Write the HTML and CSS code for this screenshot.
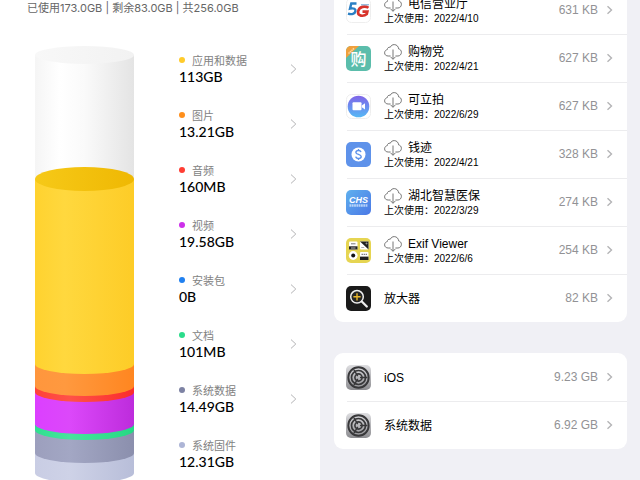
FILE: index.html
```html
<!doctype html>
<html lang="zh-CN">
  <head>
    <meta charset="utf-8">
    <meta name="viewport" content="width=device-width, initial-scale=1.0">
    <title>存储空间</title>
    <link rel="stylesheet" href="styles.css">
  </head>
  <body>
    <svg class="defs" aria-hidden="true">
      <symbol id="chevron" viewBox="0 0 7 10">
        <path d="M1 .6 5.8 5 1 9.4" fill="none" stroke="currentColor"/>
      </symbol>
      <symbol id="chevron-bold" viewBox="0 0 7 10">
        <path d="M1.500 1.200 5.500 5l-4 3.800" fill="none" stroke="currentColor" stroke-width="1.400"/>
      </symbol>
      <symbol id="cloud" viewBox="0 0 18 16">
        <path d="M6.600 12H4.200C2.200 12 .6 10.800 .6 8.900c0-1.800 1.200-3 2.700-3.300C3.300 4 4.500 2.900 6.300 3.200 7 1.500 8.500.6 10.200.6c2.500 0 4.300 1.900 4.400 4.300 1.700.3 2.800 1.700 2.800 3.400 0 2.100-1.500 3.700-3.400 3.700h-2.600M9 5.500v9.700M6.600 12.900 9 15.300l2.400-2.400" fill="none" stroke="#777" stroke-width="1"/>
      </symbol>
      <symbol id="gear" viewBox="0 0 25 25">
        <rect width="25" height="25" rx="5" fill="url(#steel)"/>
        <circle cx="12.500" cy="12.500" r="10.200" fill="none" stroke="#38383a" stroke-width="1.900"/>
        <circle cx="12.500" cy="12.500" r="7" fill="none" stroke="#38383a" stroke-width="1.700"/>
        <circle cx="12.500" cy="12.500" r="3.600" fill="none" stroke="#38383a" stroke-width="1.600"/>
        <path d="M14 12.500h7.500M11.700 11.200 8 4.800M11.700 13.800 8 20.200" stroke="#38383a" stroke-width="1.400"/>
      </symbol>
      <defs>
        <linearGradient id="steel" x1="0" y1="0" x2="0" y2="1">
          <stop offset="0" stop-color="#dedee1"/><stop offset="1" stop-color="#8c8c90"/>
        </linearGradient>
      </defs>
    </svg>

    <section class="usage">
      <p class="summary">已使用173.0GB | 剩余83.0GB | 共256.0GB</p>
      <div class="usage-body">
        <svg class="tube" viewBox="0 0 99 438" role="img" aria-label="存储空间用量">
          <defs>
            <linearGradient id="glass">
              <stop offset="0" stop-color="#f5f5f5"/><stop offset=".25" stop-color="#fff"/>
              <stop offset=".5" stop-color="#fafafa"/><stop offset="1" stop-color="#e4e4e4"/>
            </linearGradient>
            <linearGradient id="lid">
              <stop offset="0" stop-color="#f8f8f8"/><stop offset="1" stop-color="#f2f2f2"/>
            </linearGradient>
            <linearGradient id="apps">
              <stop offset="0" stop-color="#ffd22f"/><stop offset=".3" stop-color="#ffd83e"/><stop offset="1" stop-color="#fdcc27"/>
            </linearGradient>
            <linearGradient id="apps-top">
              <stop offset="0" stop-color="#f6c918"/><stop offset="1" stop-color="#efb803"/>
            </linearGradient>
            <linearGradient id="photos">
              <stop offset="0" stop-color="#ff963d"/><stop offset=".3" stop-color="#ff993f"/><stop offset="1" stop-color="#ff8620"/>
            </linearGradient>
            <linearGradient id="audio">
              <stop offset="0" stop-color="#ff4238"/><stop offset=".35" stop-color="#ff5148"/><stop offset="1" stop-color="#fb2d2b"/>
            </linearGradient>
            <linearGradient id="video">
              <stop offset="0" stop-color="#dc3fff"/><stop offset=".35" stop-color="#dc48fa"/><stop offset="1" stop-color="#bd2cdc"/>
            </linearGradient>
            <linearGradient id="docs">
              <stop offset="0" stop-color="#2fe08f"/><stop offset=".35" stop-color="#48e39d"/><stop offset="1" stop-color="#25d983"/>
            </linearGradient>
            <linearGradient id="system">
              <stop offset="0" stop-color="#9c9fbd"/><stop offset=".35" stop-color="#a3a7c4"/><stop offset="1" stop-color="#8b8fad"/>
            </linearGradient>
            <linearGradient id="firmware">
              <stop offset="0" stop-color="#c9cde4"/><stop offset=".35" stop-color="#ced2e7"/><stop offset="1" stop-color="#b8bed9"/>
            </linearGradient>
          </defs>
          <path d="M0 9h99v130H0z" fill="url(#glass)"/>
          <ellipse cx="49.500" cy="9" rx="49.500" ry="9" fill="url(#lid)"/>
          <!-- bottom layer first, each one covers the top of the one below -->
          <path d="M0 133h99v294a49.500 10 0 0 1-99 0z" fill="url(#firmware)"/>
          <path d="M0 133h99v274a49.500 10 0 0 1-99 0z" fill="url(#system)"/>
          <path d="M0 133h99v251a49.500 10 0 0 1-99 0z" fill="url(#docs)"/>
          <path d="M0 133h99v245a49.500 10 0 0 1-99 0z" fill="url(#video)"/>
          <path d="M0 133h99v213a49.500 10 0 0 1-99 0z" fill="url(#audio)"/>
          <path d="M0 133h99v207a49.500 10 0 0 1-99 0z" fill="url(#photos)"/>
          <path d="M0 133h99v185a49.500 10 0 0 1-99 0z" fill="url(#apps)"/>
          <ellipse cx="49.500" cy="133" rx="49.500" ry="12" fill="url(#apps-top)"/>
        </svg>
        <ul class="kinds">
          <li><a class="kind apps" href="#"><span class="kind-name">应用和数据</span><span class="kind-size">113GB</span><svg class="go"><use href="#chevron"/></svg></a></li>
          <li><a class="kind photos" href="#"><span class="kind-name">图片</span><span class="kind-size">13.21GB</span><svg class="go"><use href="#chevron"/></svg></a></li>
          <li><a class="kind audio" href="#"><span class="kind-name">音频</span><span class="kind-size">160MB</span><svg class="go"><use href="#chevron"/></svg></a></li>
          <li><a class="kind video" href="#"><span class="kind-name">视频</span><span class="kind-size">19.58GB</span><svg class="go"><use href="#chevron"/></svg></a></li>
          <li><a class="kind packages" href="#"><span class="kind-name">安装包</span><span class="kind-size">0B</span><svg class="go"><use href="#chevron"/></svg></a></li>
          <li><a class="kind docs" href="#"><span class="kind-name">文档</span><span class="kind-size">101MB</span><svg class="go"><use href="#chevron"/></svg></a></li>
          <li><a class="kind system" href="#"><span class="kind-name">系统数据</span><span class="kind-size">14.49GB</span><svg class="go"><use href="#chevron"/></svg></a></li>
          <li><div class="kind firmware"><span class="kind-name">系统固件</span><span class="kind-size">12.31GB</span></div></li>
        </ul>
      </div>
    </section>

    <section class="programs">
      <ul class="card scrolled">
        <li><a class="app" href="#">
          <svg class="icon" viewBox="0 0 25 25">
            <rect x=".5" y=".5" width="24" height="24" rx="5" fill="#fff" stroke="#eee"/>
            <path d="M10.500 5.500H5.300L4 10.700c4-1 5.900.3 5.400 2.600-.5 2.600-3.700 3.500-7.400 2.400" fill="none" stroke="#2a7fc4" stroke-width="2.400"/>
            <path d="M22.500 9.800c-3.200-2.200-9.500-1.500-10.400 3.700-.9 4.600 5.400 5.500 8.700 2.600l.6-2.500h-4.900" fill="none" stroke="#d8342c" stroke-width="2.600"/>
            <path d="M15 6.800h8" stroke="#6fa3d0"/>
          </svg>
          <span class="about"><span class="name"><svg class="cloud"><use href="#cloud"/></svg>电信营业厅</span><span class="date">上次使用：2022/4/10</span></span>
          <span class="size">631 KB</span><svg class="go"><use href="#chevron-bold"/></svg></a></li>
        <li><a class="app" href="#">
          <svg class="icon" viewBox="0 0 25 25">
            <rect width="25" height="25" rx="5" fill="#5bbdab"/>
            <path d="M5 0h8L0 12V5a5 5 0 0 1 5-5z" fill="#f0a03c"/>
            <path d="M2.500 7.500 8 2.400" stroke="#fbd9a4" stroke-width="1.500" stroke-dasharray="1.500 .5"/>
            <text class="glyph" x="12.500" y="19">购</text>
          </svg>
          <span class="about"><span class="name"><svg class="cloud"><use href="#cloud"/></svg>购物党</span><span class="date">上次使用：2022/4/21</span></span>
          <span class="size">627 KB</span><svg class="go"><use href="#chevron-bold"/></svg></a></li>
        <li><a class="app" href="#">
          <svg class="icon" viewBox="0 0 25 25">
            <defs><linearGradient id="cam" x1="0" y1="0" x2="0" y2="1"><stop offset="0" stop-color="#8064e8"/><stop offset="1" stop-color="#55b8f5"/></linearGradient></defs>
            <rect x=".5" y=".5" width="24" height="24" rx="5" fill="#fff" stroke="#eee"/>
            <circle cx="12.500" cy="12.500" r="10.800" fill="url(#cam)"/>
            <rect x="6.500" y="8.300" width="9" height="8" rx="1" fill="#fff"/>
            <path d="m15.800 11.500 3.200-2.300v6.400l-3.200-2.300z" fill="#fff"/>
          </svg>
          <span class="about"><span class="name"><svg class="cloud"><use href="#cloud"/></svg>可立拍</span><span class="date">上次使用：2022/6/29</span></span>
          <span class="size">627 KB</span><svg class="go"><use href="#chevron-bold"/></svg></a></li>
        <li><a class="app" href="#">
          <svg class="icon" viewBox="0 0 25 25">
            <rect width="25" height="25" rx="5" fill="#5e92ea"/>
            <circle cx="12.500" cy="12.500" r="7" fill="#fff"/>
            <path d="M15 10.200c-.3-1.200-1.300-1.700-2.500-1.700-1.500 0-2.600.7-2.600 1.900 0 2.600 5.300 1.400 5.300 4.100 0 1.300-1.200 2-2.700 2-1.400 0-2.500-.6-2.700-1.900M12.500 7v1.500M12.500 16.500V18" fill="none" stroke="#5e92ea" stroke-width="1.400"/>
          </svg>
          <span class="about"><span class="name"><svg class="cloud"><use href="#cloud"/></svg>钱迹</span><span class="date">上次使用：2022/4/21</span></span>
          <span class="size">328 KB</span><svg class="go"><use href="#chevron-bold"/></svg></a></li>
        <li><a class="app" href="#">
          <svg class="icon" viewBox="0 0 25 25">
            <defs><linearGradient id="chs" x1="0" y1="0" x2="1" y2="1"><stop offset="0" stop-color="#5fb0ee"/><stop offset="1" stop-color="#4a78e6"/></linearGradient></defs>
            <rect width="25" height="25" rx="5" fill="url(#chs)"/>
            <text class="logo" x="12.500" y="12.500">CHS</text>
            <path d="M3.500 15.500h18" stroke="#d8e9ff" stroke-width="2.400" stroke-dasharray="1.800 .5" opacity=".75"/>
          </svg>
          <span class="about"><span class="name"><svg class="cloud"><use href="#cloud"/></svg>湖北智慧医保</span><span class="date">上次使用：2022/3/29</span></span>
          <span class="size">274 KB</span><svg class="go"><use href="#chevron-bold"/></svg></a></li>
        <li><a class="app" href="#">
          <svg class="icon" viewBox="0 0 25 25">
            <rect width="25" height="25" rx="5" fill="#e6d552"/>
            <rect x="3" y="3.500" width="8.500" height="8" rx="1" fill="#fff"/><path d="M3 8.300h8.500v3.200H3z" fill="#222"/><path d="M5 5.800h4.500" stroke="#777"/><path d="M5 10h4.500" stroke="#ddd" stroke-width=".8"/>
            <rect x="14" y="3.500" width="8.500" height="8" rx="1" fill="#fff"/><path d="M14 3.500h8.500v8z" fill="#222"/><path d="M15.200 9.500h3M19.500 5.500h2M20.500 4.500v2" stroke="#999" stroke-width=".8"/>
            <circle cx="7.200" cy="17.500" r="4.400" fill="#fff"/><circle cx="7.200" cy="17.500" r="2" fill="#111"/>
            <rect x="14" y="14" width="8.500" height="8" rx="1" fill="#fff"/><path d="M14 18.600h8.500V22H14z" fill="#222"/><path d="M15.500 16.300h5.500" stroke="#666" stroke-dasharray="1.500 .6"/>
          </svg>
          <span class="about"><span class="name"><svg class="cloud"><use href="#cloud"/></svg>Exif Viewer</span><span class="date">上次使用：2022/6/6</span></span>
          <span class="size">254 KB</span><svg class="go"><use href="#chevron-bold"/></svg></a></li>
        <li><a class="app" href="#">
          <svg class="icon" viewBox="0 0 25 25">
            <rect width="25" height="25" rx="5" fill="#1a1a1a"/>
            <circle cx="11" cy="10.800" r="6.300" fill="#252525" stroke="#eee" stroke-width="1.500"/>
            <path d="m15.800 15.500 5 5" stroke="#eee" stroke-width="2.300" stroke-linecap="round"/>
            <path d="M11 7.200v7.200M7.400 10.800h7.200" stroke="#e9b72c" stroke-width="1.400"/>
          </svg>
          <span class="about"><span class="name">放大器</span></span>
          <span class="size">82 KB</span><svg class="go"><use href="#chevron-bold"/></svg></a></li>
      </ul>

      <ul class="card">
        <li><a class="app" href="#">
          <svg class="icon"><use href="#gear"/></svg>
          <span class="about"><span class="name">iOS</span></span>
          <span class="size">9.23 GB</span><svg class="go"><use href="#chevron-bold"/></svg></a></li>
        <li><a class="app" href="#">
          <svg class="icon"><use href="#gear"/></svg>
          <span class="about"><span class="name">系统数据</span></span>
          <span class="size">6.92 GB</span><svg class="go"><use href="#chevron-bold"/></svg></a></li>
      </ul>
    </section>
  </body>
</html>
```
FILE: styles.css
```css
* {
  box-sizing: border-box;
  margin: 0;
  padding: 0;
}

body {
  display: grid;
  grid-template-columns: 1fr 1fr;
  height: 100vh;
  overflow: hidden;
  background: #fff;
  font-family: "Liberation Sans", "Noto Sans CJK SC", sans-serif;
  font-size: 12px;
}

ul {
  list-style: none;
}

a {
  color: inherit;
  text-decoration: none;
}

.defs {
  position: absolute;
  width: 0;
  height: 0;
}

.go {
  width: 7px;
  height: 10px;
  flex: none;
  color: #b4b4b6;
}

/* storage cylinder and its legend */

.usage {
  overflow: hidden;
  font-family: Lato, "Noto Sans CJK SC", sans-serif;
}

.summary {
  padding-left: 27px;
  color: #666;
  font-family: Inter, "Noto Sans CJK SC", sans-serif;
  font-size: 11px;
  line-height: 16px;
  white-space: nowrap;
}

.usage-body {
  display: flex;
  gap: 45px;
  padding: 25px 23px 0 35px;
}

.tube {
  flex: none;
  width: 99px;
  height: 438px;
  margin-top: 5px;
}

.kinds {
  flex: 1;
}

.kind {
  display: grid;
  grid-template-columns: 1fr auto;
  grid-template-rows: 16px 18px;
  align-content: center;
  align-items: center;
  height: 55px;
}

.kind-name {
  display: flex;
  align-items: center;
  gap: 7px;
  color: #828282;
  font-size: 11px;
}

.kind-name::before {
  content: "";
  width: 6px;
  height: 6px;
  border-radius: 50%;
  background: var(--dot);
}

.kind-size {
  grid-row: 2;
  color: #000;
  font-size: 14px;
  font-weight: 500;
}

.kind .go {
  grid-column: 2;
  grid-row: 1 / 3;
}

.apps { --dot: #ffcb2b; }
.photos { --dot: #ff8f1c; }
.audio { --dot: #ff3d33; }
.video { --dot: #cd30ea; }
.packages { --dot: #2080f0; }
.docs { --dot: #2bdc8b; }
.system { --dot: #7d82a3; }
.firmware { --dot: #adb5d6; }

/* app list */

.programs {
  overflow: hidden;
  padding: 0 13px 0 14px;
  background: #f0f0f5;
}

.card {
  margin-bottom: 31px;
  border-radius: 9px;
  background: #fff;
}

.scrolled {
  margin-top: -14px;
}

.card li + li {
  background: linear-gradient(#ececee, #ececee) 13px 0 / 100% 1px no-repeat;
}

.app {
  display: flex;
  align-items: center;
  height: 48px;
  padding: 0 14px 0 12px;
}

.icon {
  flex: none;
  width: 25px;
  height: 25px;
  margin-right: 13px;
}

.about {
  flex: 1;
  padding-top: 1px;
  color: #000;
  white-space: nowrap;
}

.name {
  display: flex;
  align-items: center;
  gap: 6px;
  line-height: 16px;
}

.cloud {
  width: 18px;
  height: 16px;
}

.date {
  display: block;
  font-size: 10px;
  line-height: 13px;
}

.size {
  margin-right: 8px;
  color: #929295;
}

.glyph {
  fill: #fff;
  font-size: 16px;
  font-weight: 500;
  text-anchor: middle;
}

.logo {
  fill: #fff;
  font-size: 9px;
  font-style: italic;
  font-weight: bold;
  text-anchor: middle;
}
```
